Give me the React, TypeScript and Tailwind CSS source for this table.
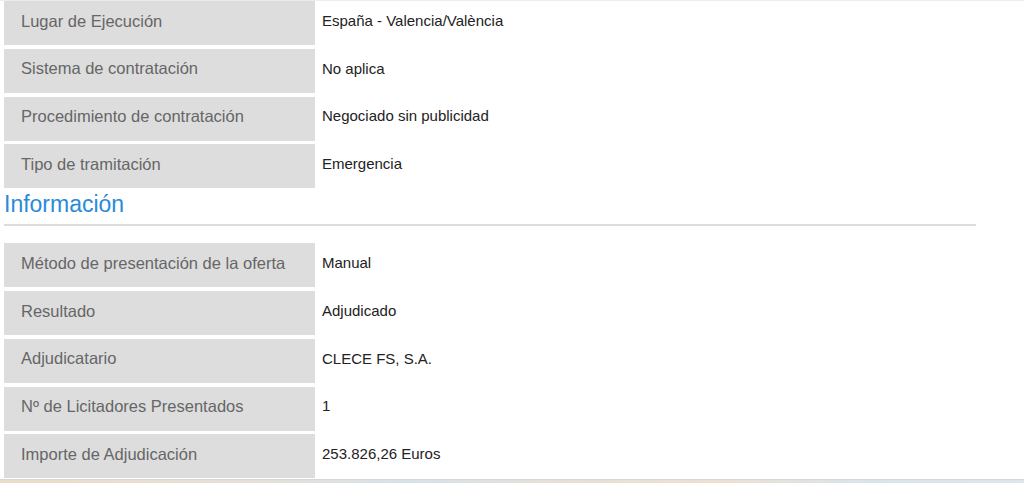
import React from "react";

const general = [
  ["Lugar de Ejecución", "España - Valencia/València"],
  ["Sistema de contratación", "No aplica"],
  ["Procedimiento de contratación", "Negociado sin publicidad"],
  ["Tipo de tramitación", "Emergencia"],
];

const informacion = [
  ["Método de presentación de la oferta", "Manual"],
  ["Resultado", "Adjudicado"],
  ["Adjudicatario", "CLECE FS, S.A."],
  ["Nº de Licitadores Presentados", "1"],
  ["Importe de Adjudicación", "253.826,26 Euros"],
];

function DataTable({ rows }: { rows: string[][] }) {
  return (
    <div className="flex flex-col gap-[3.75px] w-[972px] pl-[4px]">
      {rows.map(([label, value]) => (
        <div key={label} className="flex h-[44px] gap-[3px]">
          <div className="w-[311px] shrink-0 bg-[#dddddd] flex items-center pl-[17px] pb-[4px] text-[16.5px] text-[#666666]">
            {label}
          </div>
          <div className="flex-1 flex items-center pl-[4px] pb-[4px] text-[15px] text-[#222222]">
            {value}
          </div>
        </div>
      ))}
    </div>
  );
}

export default function App() {
  return (
    <div
      className="relative w-[1024px] h-[483px] bg-white overflow-hidden flex flex-col"
      style={{ fontFamily: '"Liberation Sans", Arial, sans-serif' }}
    >
      <div className="h-[1px] bg-[#ececec]" />
      <DataTable rows={general} />

      {/* Información */}
      <div className="pl-[4px] pt-[1px] w-[976px]">
        <h2 className="text-[23px] leading-[30px] text-[#2b8ad8] font-normal">Información</h2>
        <div className="mt-[5px] h-[2px] bg-[#dddddd]" />
      </div>

      <div className="mt-[17px]">
        <DataTable rows={informacion} />
      </div>

      <div className="flex-1" />
      <div className="h-[1px] bg-[#d6d6d6]" />
      <div className="h-[3px] bg-[linear-gradient(90deg,#ecdcc8_0%,#e6e0d8_25%,#d6e2ea_40%,#e8e0d6_55%,#ece0cf_70%,#d8e4ec_85%,#dde6ec_100%)]" />
    </div>
  );
}
